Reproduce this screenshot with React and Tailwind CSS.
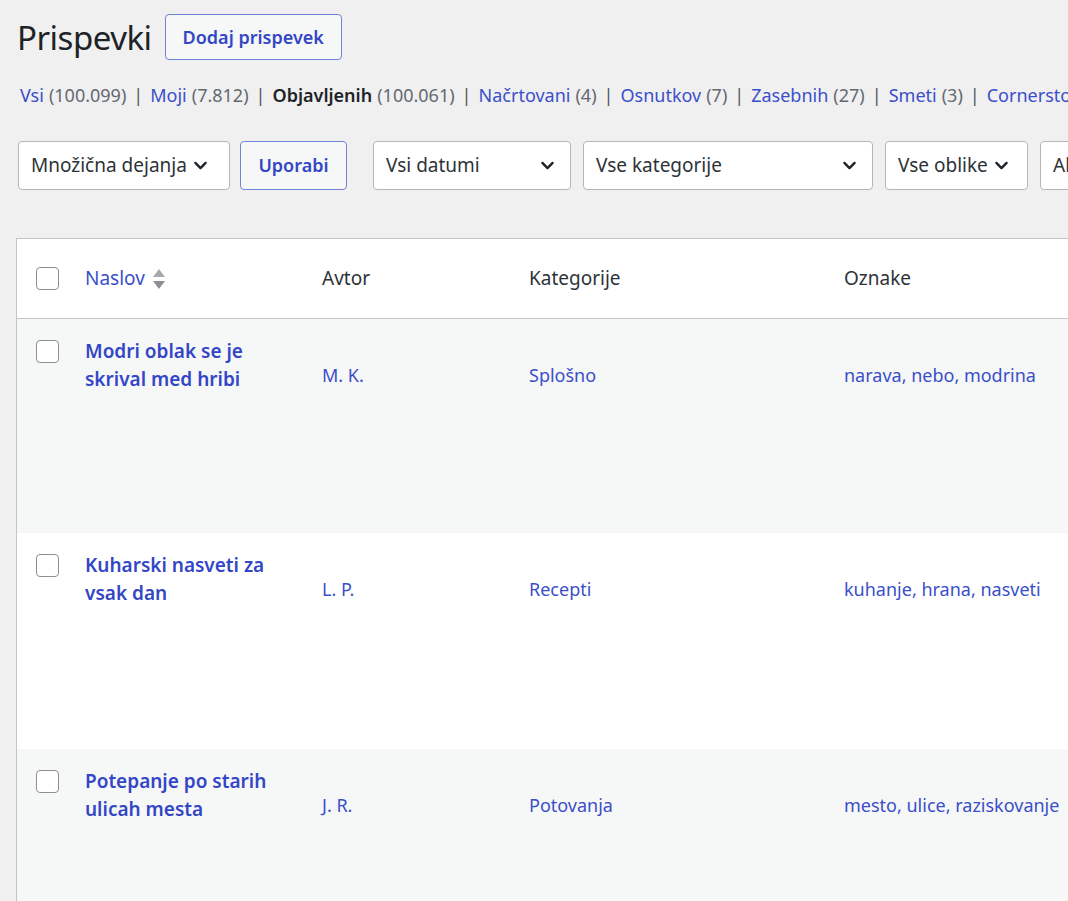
import React from 'react';

const font = { fontFamily: '"Noto Sans", "Open Sans", Arial, sans-serif' };

const statuses = [
  { label: 'Vsi', count: '100.099' },
  { label: 'Moji', count: '7.812' },
  { label: 'Objavljenih', count: '100.061', current: true },
  { label: 'Načrtovani', count: '4' },
  { label: 'Osnutkov', count: '7' },
  { label: 'Zasebnih', count: '27' },
  { label: 'Smeti', count: '3' },
  { label: 'Cornerstone', count: '12' }
];

const posts = [
  { title: ['Modri oblak se je', 'skrival med hribi'], author: 'M. K.', cat: 'Splošno', tags: 'narava, nebo, modrina', bg: 'bg-[#f6f7f7]', h: 'h-[214px]' },
  { title: ['Kuharski nasveti za', 'vsak dan'], author: 'L. P.', cat: 'Recepti', tags: 'kuhanje, hrana, nasveti', bg: 'bg-white', h: 'h-[216px]' },
  { title: ['Potepanje po starih', 'ulicah mesta'], author: 'J. R.', cat: 'Potovanja', tags: 'mesto, ulice, raziskovanje', bg: 'bg-[#f6f7f7]', h: 'h-[160px]' }
];

const Chevron = () => (
  <svg width="17" height="17" viewBox="0 0 20 20" fill="none" stroke="#1d2327" strokeWidth="2.8" strokeLinecap="round" strokeLinejoin="round">
    <path d="M4 7l6 6 6-6" />
  </svg>
);

const Select = ({ label, width, spread }) => (
  <div className={`h-[49px] ${width} shrink-0 flex items-center ${spread ? 'justify-between pr-[14px]' : 'gap-[5px] pr-[8px]'} pl-[12px] bg-white border border-[#b4b6b9] rounded-[4px] text-[19px] text-[#2c3338]`}>
    <span className="whitespace-nowrap">{label}</span>
    <Chevron />
  </div>
);

const Checkbox = () => (
  <div className="w-[23px] h-[23px] rounded-[4px] border-[1.5px] border-[#8c8f94] bg-white" />
);

const SortIcon = () => (
  <svg width="14" height="24" viewBox="0 0 14 24" className="ml-[7px]">
    <path d="M7 2l6 8H1z" fill="#a7aaad" />
    <path d="M7 22l6-8H1z" fill="#8c8f94" />
  </svg>
);

export default function App() {
  return (
    <div className="min-h-[901px] w-[1068px] overflow-hidden bg-[#f0f0f1]" style={font}>
      {/* HEADER */}
      <div className="flex items-center pl-[17px] pt-[14px]">
        <h1 className="text-[33px] leading-[45px] text-[#1d2327] tracking-[-0.5px]">Prispevki</h1>
        <div className="ml-[13px] h-[46px] px-[17px] flex items-center border border-[#7083d9] rounded-[4px] bg-[#f6f7f7] text-[18px] font-semibold text-[#3346c6] whitespace-nowrap">
          Dodaj prispevek
        </div>
      </div>

      {/* STATUS LINKS */}
      <div className="mt-[22px] pl-[20px] flex items-center text-[18px] whitespace-nowrap h-[26px]">
        {statuses.map((s, i) => (
          <span key={s.label} className="flex items-center shrink-0">
            {s.current ? (
              <span className="font-semibold text-[#1d2327]">{s.label}</span>
            ) : (
              <span className="text-[#3b4fc9]">{s.label}</span>
            )}
            <span className="ml-[5px] text-[#646970]">({s.count})</span>
            {i < statuses.length - 1 && <span className="mx-[7px] text-[#50575e]">|</span>}
          </span>
        ))}
      </div>

      {/* FILTERS */}
      <div className="mt-[33px] pl-[18px] flex items-center">
        <Select label="Množična dejanja" width="w-[212px]" />
        <div className="ml-[10px] h-[49px] w-[107px] shrink-0 flex items-center justify-center border border-[#7083d9] rounded-[4px] bg-[#f6f7f7] text-[18px] font-semibold text-[#3346c6]">
          Uporabi
        </div>
        <div className="ml-[26px]"><Select label="Vsi datumi" width="w-[198px]" spread /></div>
        <div className="ml-[12px]"><Select label="Vse kategorije" width="w-[290px]" spread /></div>
        <div className="ml-[12px]"><Select label="Vse oblike" width="w-[143px]" /></div>
        <div className="ml-[12px]"><Select label="All SEO Scores" width="w-[200px]" /></div>
      </div>

      {/* TABLE */}
      <div className="mt-[48px] ml-[16px] w-[1100px] border-l border-t border-[#c3c4c7]">
        <div className="grid grid-cols-[68px_237px_207px_315px_1fr] h-[80px] items-center bg-white border-b border-[#c3c4c7] text-[19px] text-[#2c3338]">
          <div className="pl-[19px]"><Checkbox /></div>
          <div className="flex items-center text-[#3b4fc9]">Naslov <SortIcon /></div>
          <div>Avtor</div>
          <div>Kategorije</div>
          <div>Oznake</div>
        </div>

        {posts.map((p) => (
          <div key={p.author} className={`grid grid-cols-[68px_237px_207px_315px_1fr] ${p.h} ${p.bg} text-[18px]`}>
            <div className="pl-[19px] pt-[21px]"><Checkbox /></div>
            <div className="pt-[18px] text-[19px] leading-[28px] font-semibold text-[#3346c6]">
              <div>{p.title[0]}</div>
              <div>{p.title[1]}</div>
            </div>
            <div className="pt-[42px] leading-[28px] text-[#3b4fc9]">{p.author}</div>
            <div className="pt-[42px] leading-[28px] text-[#3b4fc9]">{p.cat}</div>
            <div className="pt-[42px] leading-[28px] text-[#3b4fc9] whitespace-nowrap">{p.tags}</div>
          </div>
        ))}
      </div>
    </div>
  );
}
